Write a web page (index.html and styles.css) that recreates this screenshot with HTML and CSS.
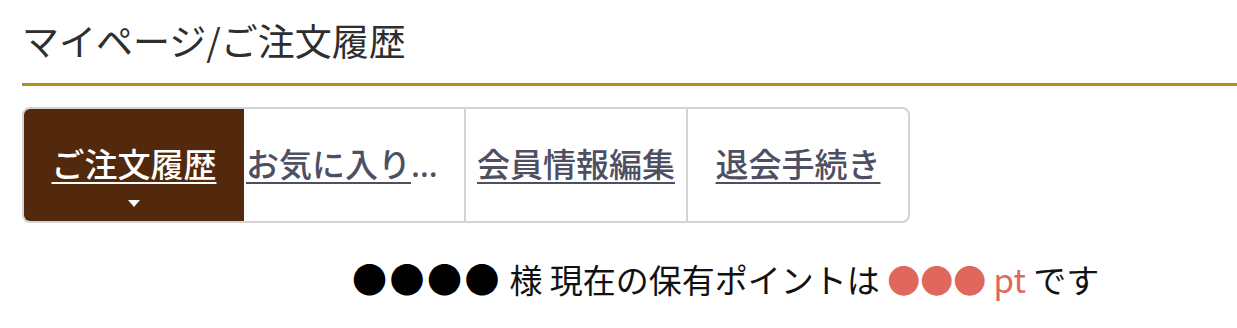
FILE: index.html
```html
<!DOCTYPE html>
<html lang="ja">
<head>
<meta charset="utf-8">
<link rel="stylesheet" href="styles.css">
</head>
<body>
<div class="page">
  <h1 class="title">マイページ/ご注文履歴</h1>
  <nav class="tabs">
    <a class="tab active" href="#"><span class="label">ご注文履歴</span><span class="caret"></span></a>
    <a class="tab" href="#"><span class="label">お気に入り商品</span></a>
    <a class="tab" href="#"><span class="label">会員情報編集</span></a>
    <a class="tab" href="#"><span class="label">退会手続き</span></a>
  </nav>
  <p class="points"><span class="dots">●●●●</span> 様 現在の保有ポイントは <span class="pt"><span class="rdots">●●●</span> pt</span> です</p>
</div>
</body>
</html>
```
FILE: styles.css
```css
html, body { margin: 0; padding: 0; background: #fff; }
body { font-family: "Noto Sans", "Noto Sans CJK JP", sans-serif; }
.page { padding: 0 0 0 22px; }
.title {
  margin: 0;
  padding-top: 15px;
  height: 86px;
  box-sizing: border-box;
  font-family: "Noto Sans CJK JP", sans-serif;
  font-size: 37px;
  font-weight: 400;
  color: #2e2e2e;
  line-height: 50px;
  border-bottom: 3px solid #b0901e;
}
.tabs {
  display: flex;
  width: 888px;
  height: 116px;
  margin-top: 21px;
  box-sizing: border-box;
  border: 2px solid #d4d4d4;
  border-radius: 8px;
  overflow: hidden;
}
.tab {
  flex: 1 1 0;
  min-width: 0;
  position: relative;
  display: flex;
  align-items: center;
  justify-content: center;
  color: #4f4f63;
  text-decoration: none;
  border-left: 2px solid #d4d4d4;
}
.tab:first-child { border-left: none; }
.tab:nth-child(2) { border-left: none; }
.label {
  display: block;
  max-width: 100%;
  overflow: hidden;
  white-space: nowrap;
  text-overflow: ellipsis;
  font-size: 33px;
  font-weight: 500;
  text-decoration: underline;
  text-decoration-thickness: 2px;
  text-underline-offset: 5px;
  padding: 0 3px;
  box-sizing: border-box;
  line-height: 50px;
}
.tab:nth-child(2) .label { padding: 0 4px 0 2px; }
.active { background: #52290c; color: #fff; }
.caret {
  position: absolute;
  left: 50%;
  bottom: 14px;
  margin-left: -6px;
  width: 0; height: 0;
  border-left: 6px solid transparent;
  border-right: 6px solid transparent;
  border-top: 7px solid #fff;
}
.points {
  margin: 33px 0 0 330px;
  font-family: "Noto Sans CJK JP", sans-serif;
  font-size: 33px;
  line-height: 44px;
  color: #111;
}
.dots { font-size: 35px; color: #000; letter-spacing: 2.5px; line-height: 44px; }
.pt { color: #e0675b; }
```
